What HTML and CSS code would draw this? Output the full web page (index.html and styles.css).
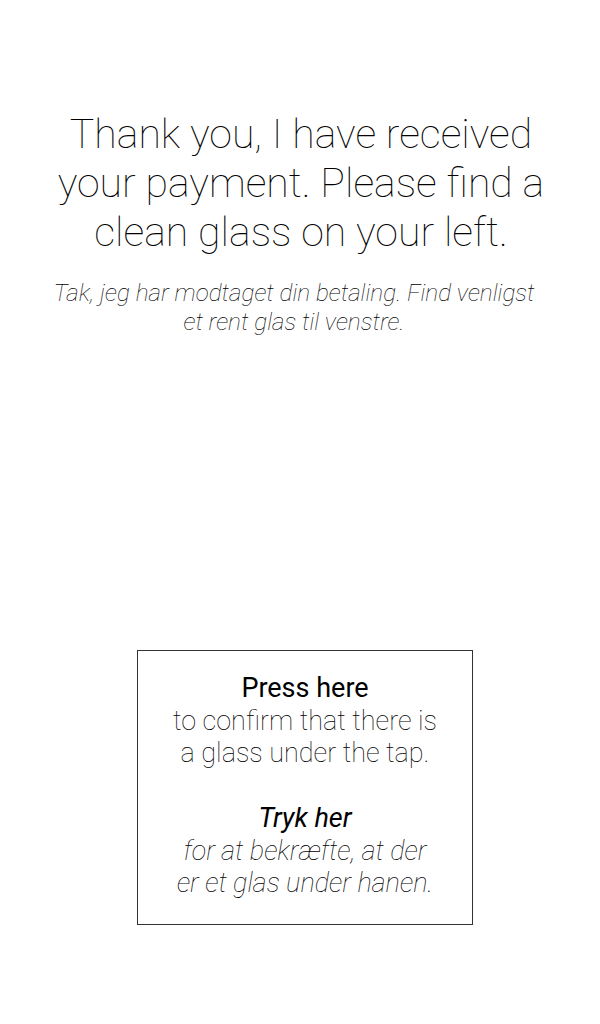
FILE: index.html
```html
<!DOCTYPE html>
<html>
<head>
<meta charset="utf-8">
<link rel="stylesheet" href="styles.css">
</head>
<body>
<main class="screen">
  <section class="message">
    <h1 class="title">Thank you, I have received your payment. Please find a clean glass on your left.</h1>
    <p class="subtitle">Tak, jeg har modtaget din betaling. Find venligst et rent glas til venstre.</p>
  </section>
  <button class="confirm" type="button">
    <span class="lead">Press here</span>
    <span class="body">to confirm that there is<br>a glass under the tap.</span>
    <span class="lead italic spaced">Tryk her</span>
    <span class="body italic">for at bekræfte, at der<br>er et glas under hanen.</span>
  </button>
</main>
</body>
</html>
```
FILE: styles.css
```css
html, body {
  margin: 0;
  padding: 0;
  background: #fff;
}
body {
  font-family: Roboto, "Noto Sans", sans-serif;
  color: #000;
}
.screen {
  width: 600px;
  height: 1024px;
  display: flex;
  flex-direction: column;
  align-items: center;
  box-sizing: border-box;
  padding-top: 110px;
}
.message {
  width: 496px;
  padding-left: 2px;
  text-align: center;
}
.title {
  margin: 0;
  font-weight: 100;
  font-size: 41px;
  line-height: 49px;
  color: #000;
}
.subtitle {
  margin: 21px 14px 0 0;
  font-style: italic;
  font-weight: 100;
  font-size: 24.3px;
  line-height: 29px;
  color: #000;
}
.confirm {
  margin-top: 314px;
  margin-left: 10px;
  width: 336px;
  height: 275px;
  box-sizing: border-box;
  border: 1px solid #333;
  background: #fff;
  padding: 21px 0 0;
  display: flex;
  flex-direction: column;
  align-items: center;
  justify-content: flex-start;
  font-family: Roboto, "Noto Sans", sans-serif;
  text-align: center;
  cursor: pointer;
}
.lead {
  font-size: 27px;
  font-weight: 400;
  line-height: 32.5px;
  color: #000;
}
.body {
  font-size: 27px;
  font-weight: 100;
  line-height: 32.5px;
  color: #000;
}
.italic {
  font-style: italic;
}
.spaced {
  margin-top: 32.5px;
}
```
